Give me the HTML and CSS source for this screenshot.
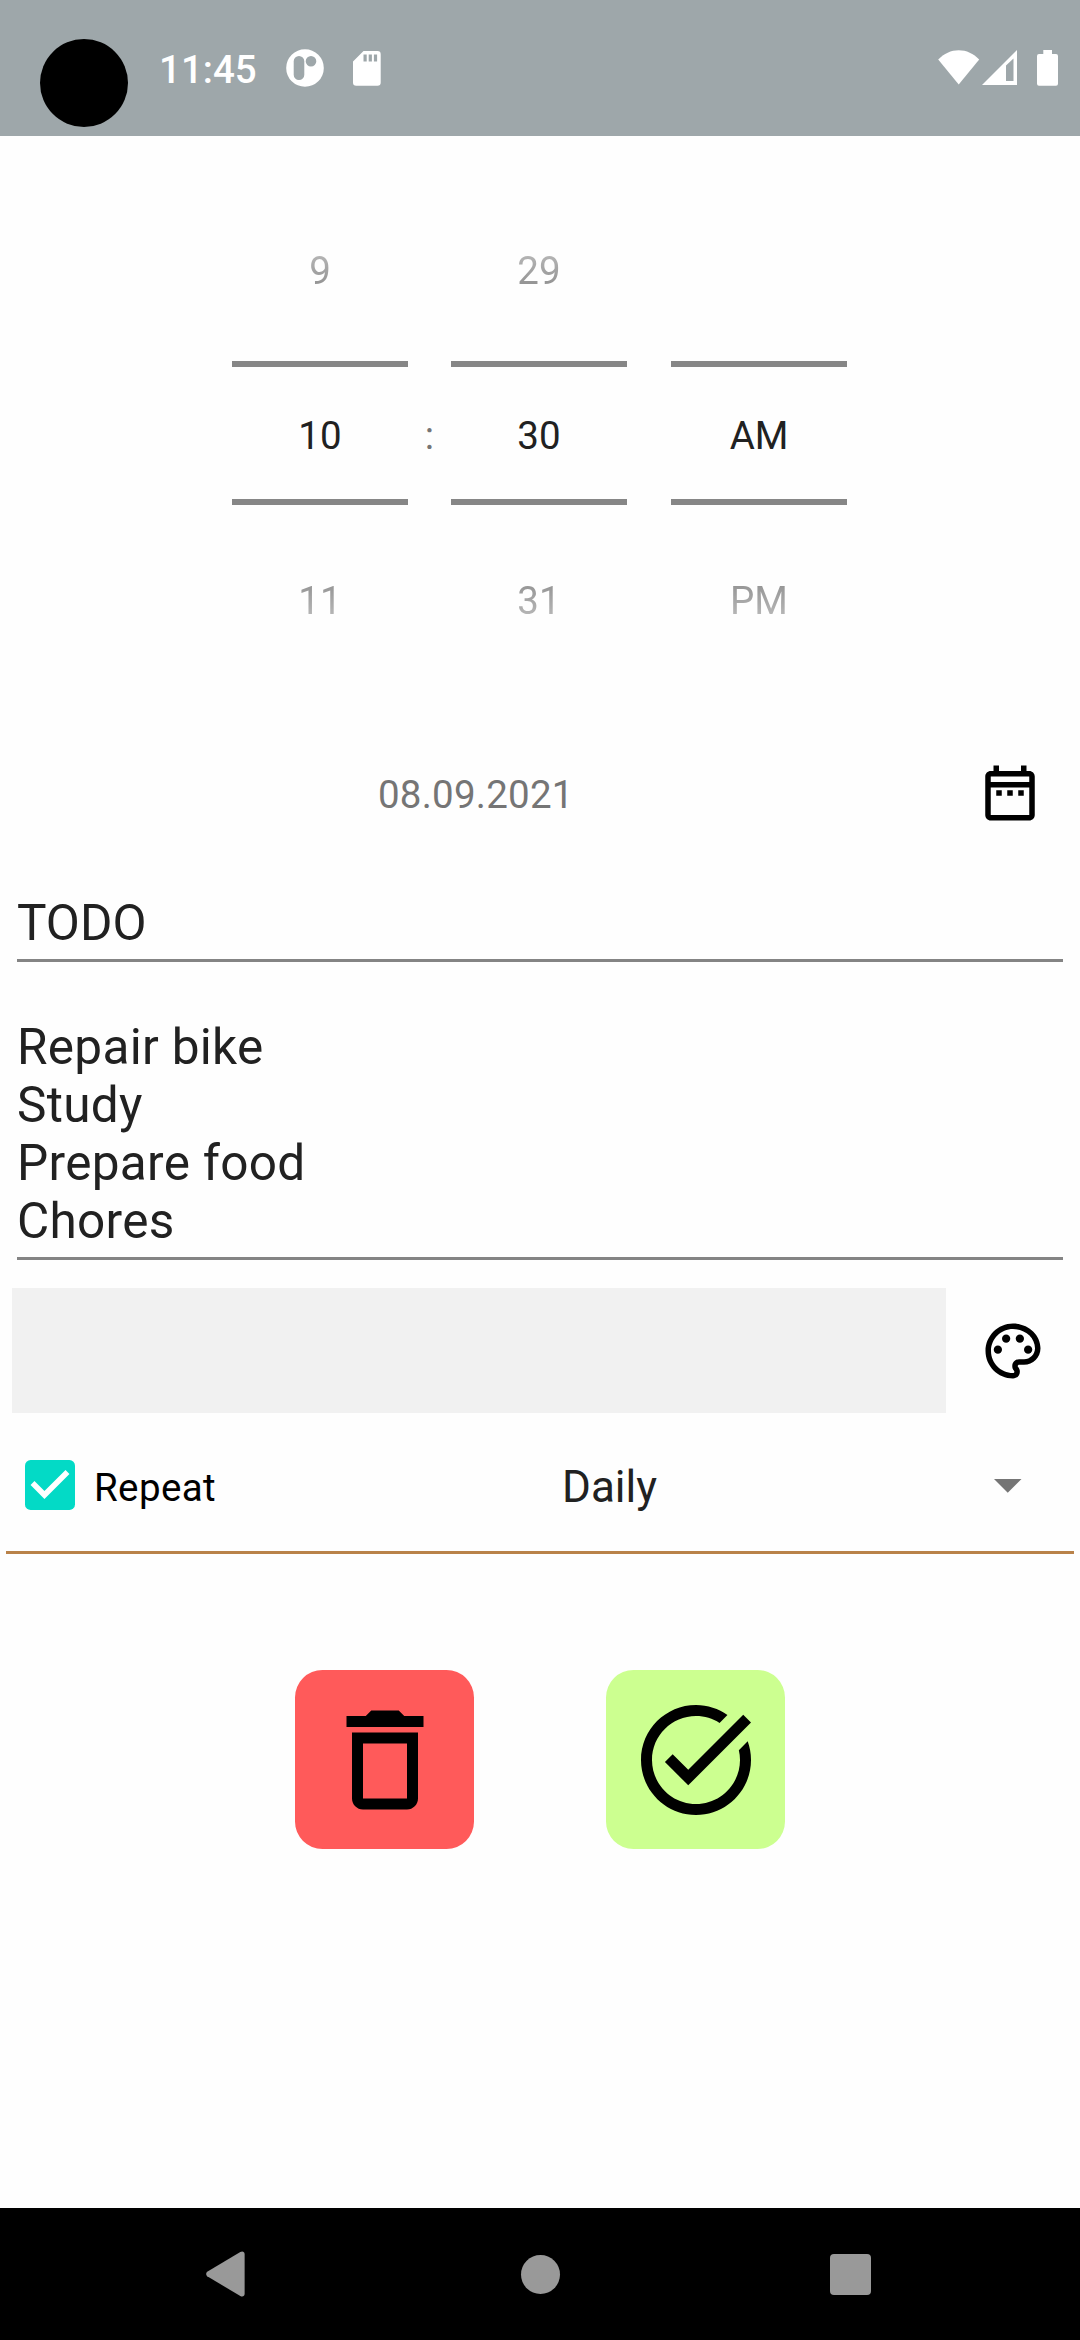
FILE: index.html
```html
<!DOCTYPE html>
<html lang="en">
<head>
<meta charset="utf-8">
<title>Reminder</title>
<link rel="stylesheet" href="styles.css">
</head>
<body>
<div class="screen">
  <header class="status">
    <span class="camera"></span>
    <span class="clock">11:45</span>
    <svg class="app-icon" width="38" height="38" viewBox="0 0 38 38"><path fill="#fff" fill-rule="evenodd" d="M19 0.200a18.800 18.800 0 1 0 0 37.600a18.800 18.800 0 1 0 0-37.600zM13 7a5.300 5.300 0 0 1 5.300 5.300v13.400a5.300 5.300 0 0 1-10.600 0V12.300A5.300 5.300 0 0 1 13 7zM25 7a5.300 5.300 0 1 1 0 10.600a5.300 5.300 0 1 1 0-10.600z"/></svg>
    <svg class="sd-icon" width="28" height="35" viewBox="0 0 28 35"><path fill="#fff" fill-rule="evenodd" d="M10.500 0H24.500a3.200 3.200 0 0 1 3.200 3.200V31.500a3.200 3.200 0 0 1-3.200 3.200H3.200A3.200 3.200 0 0 1 0 31.500V10.500zM10.500 3.500v7h3.200v-7zM15.700 3.500v7h3.200v-7zM20.900 3.500v7h3.200v-7z"/></svg>
    <span class="spacer"></span>
    <svg class="wifi" width="42" height="35" viewBox="0 0 42 35"><path fill="#fff" d="M0.200 9.500C6 3.500 13 0.200 20.700 0.200S35.500 3.500 41.200 9.500L20.700 34.500z"/></svg>
    <svg class="signal" width="36" height="36" viewBox="0 0 36 36"><path fill="#fff" fill-rule="evenodd" d="M0 35L35 0V35zM24 15.500V31h7.500V8.500z"/></svg>
    <svg class="battery" width="22" height="36" viewBox="0 0 22 36"><path fill="#fff" d="M6.300 0h8.700v4h4a2 2 0 0 1 2 2v27.800a2 2 0 0 1-2 2H2a2 2 0 0 1-2-2V6a2 2 0 0 1 2-2h4.300z"/></svg>
  </header>

  <main>
    <section class="picker">
      <div class="column"><div class="prev">9</div><div class="current">10</div><div class="next">11</div></div>
      <div class="colon">:</div>
      <div class="column"><div class="prev">29</div><div class="current">30</div><div class="next">31</div></div>
      <div class="gap"></div>
      <div class="column"><div class="prev"></div><div class="current">AM</div><div class="next">PM</div></div>
    </section>

    <section class="date-row">
      <span class="date">08.09.2021</span>
      <svg width="66" height="66" viewBox="0 0 24 24"><path fill-rule="evenodd" d="M19 4h-1V2h-2v2H8V2H6v2H5c-1.110 0-2 .9-2 2v14c0 1.100.89 2 2 2h14c1.100 0 2-.9 2-2V6c0-1.100-.9-2-2-2zm0 16H5V10h14zm0-12H5V6h14zM7 11h2v2H7zM11 11h2v2h-2zM15 11h2v2h-2z"/></svg>
    </section>

    <div class="field title">TODO</div>
    <div class="field note">Repair bike<br>Study<br>Prepare food<br>Chores</div>

    <section class="color-row">
      <div class="swatch"></div>
      <svg width="66" height="66" viewBox="0 0 24 24"><path d="M12 22C6.490 22 2 17.510 2 12S6.490 2 12 2s10 4.040 10 9c0 3.310-2.690 6-6 6h-1.770c-.28 0-.5.22-.5.5 0 .12.05.23.13.33.41.47.64 1.060.64 1.670 0 1.380-1.120 2.500-2.500 2.500zm0-18c-4.410 0-8 3.590-8 8s3.590 8 8 8c.28 0 .5-.22.5-.5 0-.16-.08-.28-.14-.35-.41-.46-.63-1.050-.63-1.650 0-1.380 1.120-2.500 2.500-2.500H16c2.210 0 4-1.790 4-4 0-3.860-3.590-7-8-7z"/><circle cx="6.500" cy="11.500" r="1.500"/><circle cx="9.500" cy="7.500" r="1.500"/><circle cx="14.500" cy="7.500" r="1.500"/><circle cx="17.500" cy="11.500" r="1.500"/></svg>
    </section>

    <section class="repeat-row">
      <svg width="50" height="50" viewBox="3 3 18 18"><rect x="3" y="3" width="18" height="18" rx="2" fill="#03dac6"/><path fill="#fff" d="M10 17l-5-5 1.410-1.410L10 14.170l7.590-7.590L19 8z"/></svg>
      <span class="repeat-label">Repeat</span>
      <span class="interval">Daily</span>
      <svg class="arrow" width="28" height="14" viewBox="0 0 28 14"><path fill="#757575" d="M0 0h27.500L13.750 13.750z"/></svg>
    </section>

    <section class="actions">
      <div class="button delete"><svg width="132" height="132" viewBox="0 0 24 24"><path fill-rule="evenodd" d="M14.500 3h-5l-1 1H5v2h14V4h-3.500zM6 7v12c0 1.100.9 2 2 2h8c1.100 0 2-.9 2-2V7zM8 9h8v10H8z"/></svg></div>
      <div class="button done"><svg width="132" height="132" viewBox="0 0 24 24"><path d="M22 5.180L10.590 16.600l-4.240-4.240 1.410-1.410 2.830 2.830 10-10zM19.790 10.220C19.920 10.790 20 11.390 20 12c0 4.420-3.580 8-8 8s-8-3.580-8-8 3.580-8 8-8c1.580 0 3.040.46 4.280 1.250l1.440-1.440C16.100 2.670 14.130 2 12 2 6.480 2 2 6.480 2 12s4.480 10 10 10 10-4.480 10-10c0-1.190-.22-2.330-.6-3.390z"/></svg></div>
    </section>
  </main>

  <nav class="navbar">
    <svg width="40" height="46" viewBox="0 0 40 46"><path fill="#999" d="M1.200 20.700L34.300 1C36.500-.3 38.600.8 38.600 3.200V42.800C38.600 45.200 36.500 46.300 34.300 45L1.200 25.300C-.2 24.200-.2 21.800 1.200 20.700z"/></svg>
    <span class="home"></span>
    <span class="recent"></span>
  </nav>
</div>
</body>
</html>
```

FILE: styles.css
```css
* { box-sizing: border-box; }
body { margin: 0; }
svg { display: block; flex: none; }

.screen {
  display: flex;
  flex-direction: column;
  width: 1080px;
  height: 2340px;
  background: #fefefe;
  font-family: Roboto, "Noto Sans", sans-serif;
  font-size: 38.5px;
  color: #212121;
}

/* Status bar */
.status {
  display: flex;
  align-items: flex-start;
  height: 136px;
  padding: 39px 22px 0 40px;
  background: #9ea7aa;
}
.camera { width: 88px; height: 88px; border-radius: 50%; background: #000; }
.clock {
  width: 127px;
  margin: 11px 0 0 31px;
  line-height: 40px;
  font-weight: 500;
  color: #fff;
}
.app-icon { margin: 10px 0 0; }
.sd-icon { margin: 12px 0 0 29px; }
.spacer { flex: 1; }
.wifi { margin: 11px 2px 0 0; }
.signal { margin: 11px 19px 0 0; }
.battery { margin-top: 11px; margin-right: -1px; }

main { flex: 1; }

/* Time picker */
.picker { display: flex; height: 561px; padding: 52px 0 0 232px; text-align: center; }
.column { width: 176px; }
.prev {
  height: 173px;
  line-height: 165px;
  -webkit-mask-image: linear-gradient(to bottom, transparent 4px, #000 197px);
  mask-image: linear-gradient(to bottom, transparent 4px, #000 197px);
}
.current {
  height: 144px;
  padding-top: 6px;
  border: solid #868686;
  border-width: 6px 0;
  line-height: 126px;
}
.next {
  height: 192px;
  line-height: 192px;
  -webkit-mask-image: linear-gradient(to bottom, #000 -30px, transparent 177px);
  mask-image: linear-gradient(to bottom, #000 -30px, transparent 177px);
}
.colon { width: 43px; padding-top: 185px; line-height: 126px; color: #757575; }
.gap { width: 44px; }

/* Date */
.date-row {
  display: flex;
  align-items: center;
  justify-content: space-between;
  height: 192px;
  padding: 0 37px 0 0;
}
.date {
  flex: 1;
  padding-left: 378px;
  padding-top: 3px;
  letter-spacing: .22px;
  color: #757575;
}

/* Text fields */
.field {
  margin: 0 17px;
  border-bottom: 3px solid #848484;
  font-size: 49.5px;
  line-height: 58px;
}
.title { height: 73px; padding-top: 5px; }
.note { height: 298px; padding-top: 56px; letter-spacing: .3px; }

/* Colour */
.color-row {
  display: flex;
  align-items: center;
  justify-content: space-between;
  height: 125px;
  margin: 28px 34px 0 12px;
}
.swatch { width: 934px; height: 125px; background: #f1f1f1; }

/* Repeat */
.repeat-row {
  display: flex;
  align-items: center;
  height: 141px;
  margin: 0 6px;
  padding: 6px 52px 0 19px;
  border-bottom: 3px solid #b98249;
}
.repeat-label {
  width: 487px;
  margin-top: 4px;
  padding-left: 19px;
  letter-spacing: .4px;
  color: #000;
}
.interval { flex: 1; margin-top: 4px; font-size: 44px; }
.arrow { margin-top: 2px; }

/* Buttons */
.actions { display: flex; gap: 132px; padding: 116px 0 0 295px; }
.button {
  display: flex;
  align-items: center;
  justify-content: center;
  width: 179px;
  height: 179px;
  padding-left: 1px;
  border-radius: 27.500px;
}
.delete { background: #ff5a5a; }
.done { background: #ccff90; }

/* Navigation bar */
.navbar {
  display: flex;
  align-items: center;
  height: 132px;
  padding-left: 206px;
  background: #000;
}
.home { width: 39px; height: 39px; margin-left: 275px; border-radius: 50%; background: #999; }
.recent { width: 41px; height: 41px; margin-left: 270px; border-radius: 4px; background: #999; }
```
